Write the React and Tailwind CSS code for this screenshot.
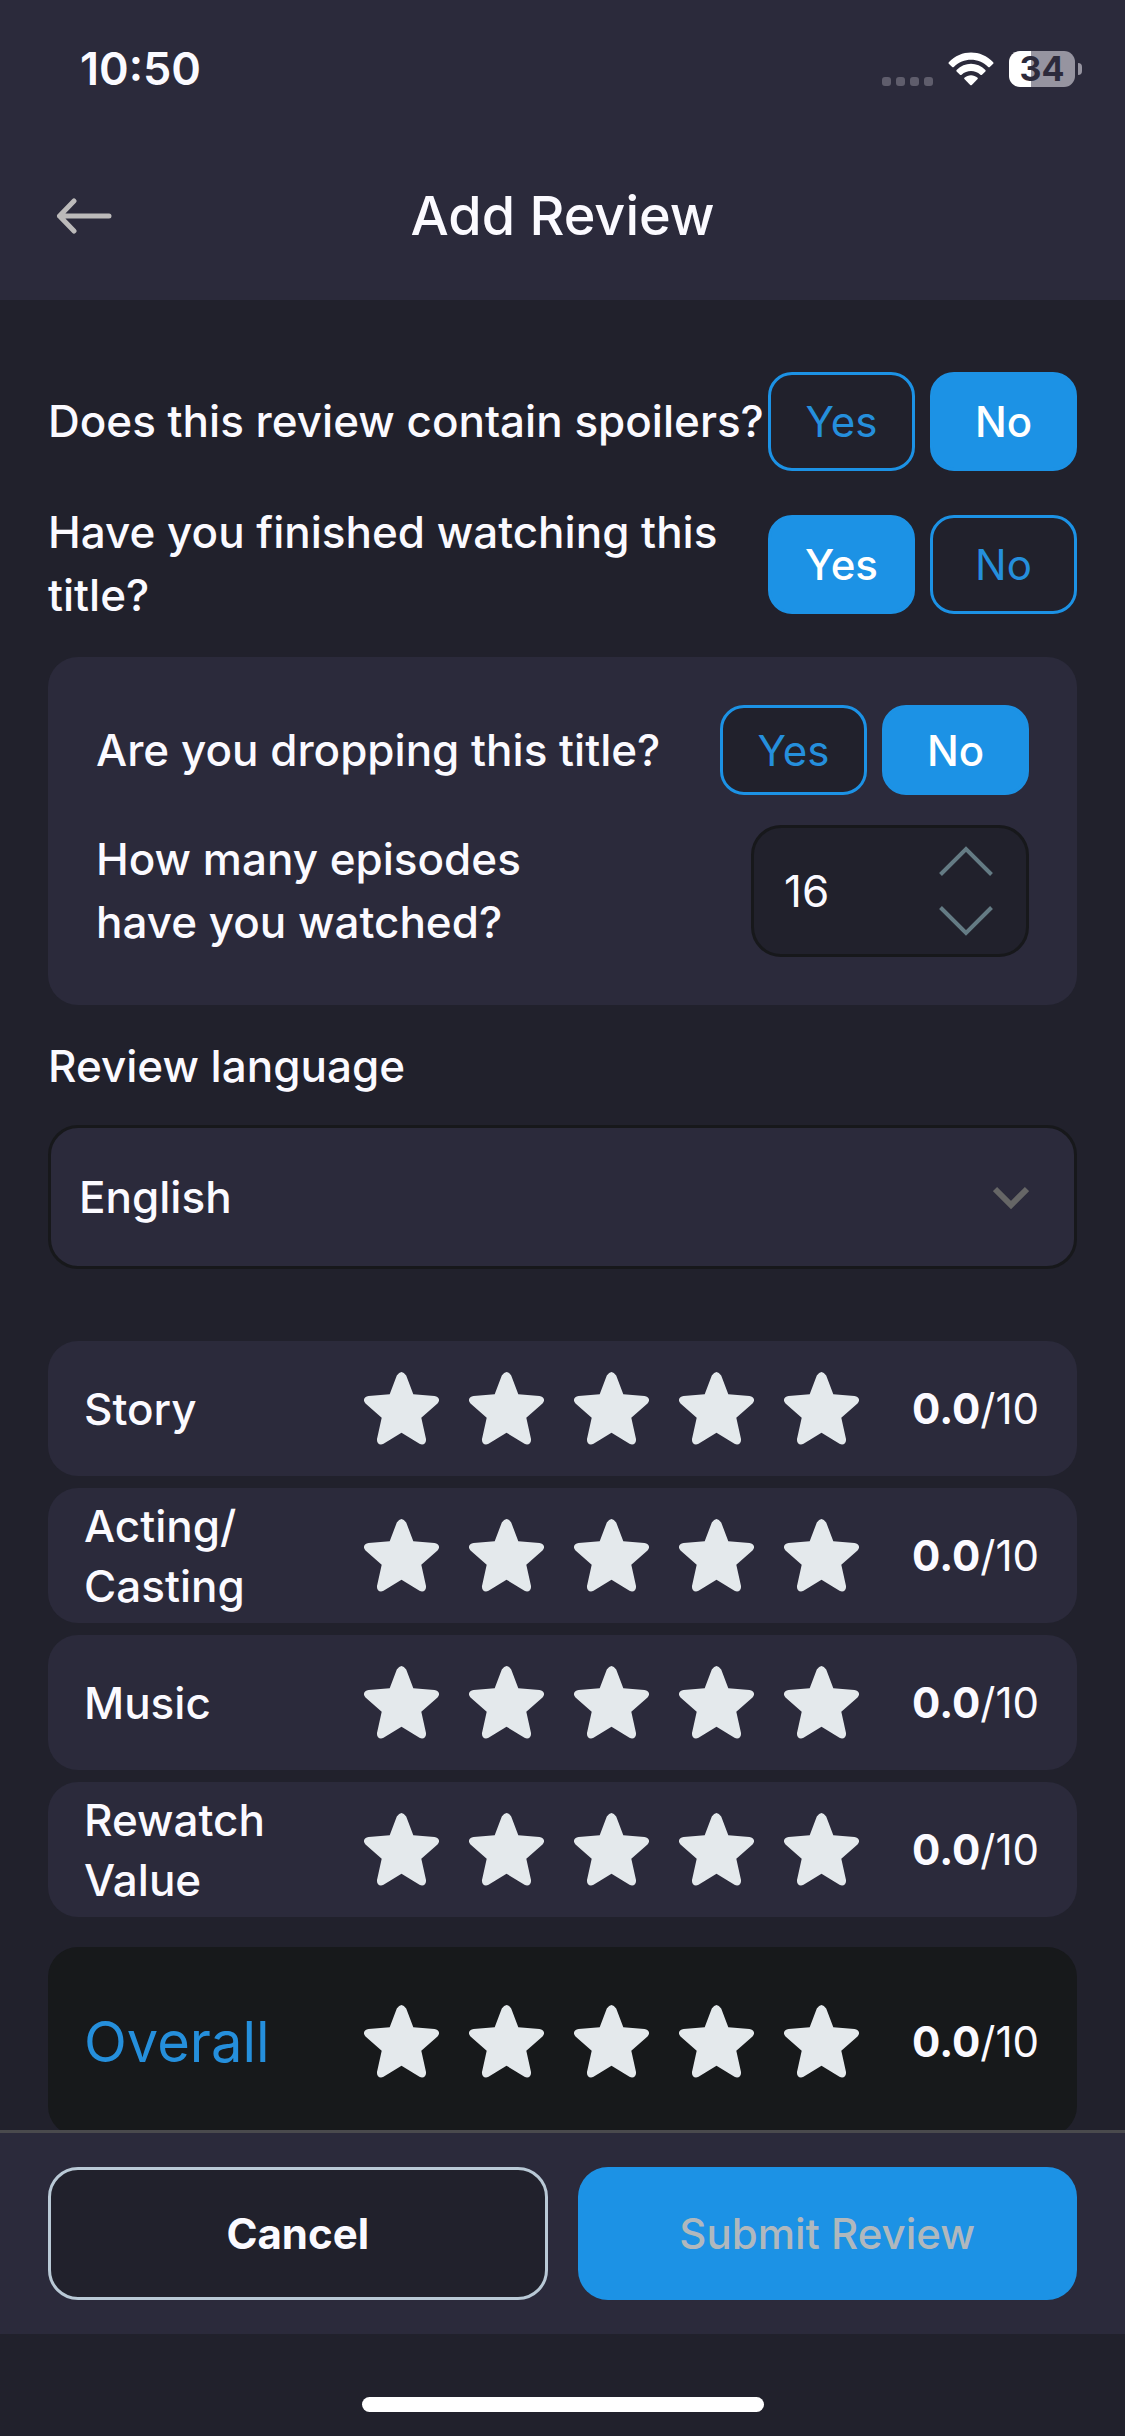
import { useState } from "react";

const STARS = [1, 2, 3, 4, 5];

function StatusBar() {
  return (
    <div className="flex items-center justify-between pt-9 pr-[43px] pl-20">
      <span className="text-[45px] leading-[66px] font-semibold">10:50</span>
      <div className="flex items-center gap-[15px]">
        <div className="flex gap-[5px] pt-6" aria-label="No signal">
          <span className="size-[9px] rounded-[3px] bg-[#5f5d6c]" />
          <span className="size-[9px] rounded-[3px] bg-[#5f5d6c]" />
          <span className="size-[9px] rounded-[3px] bg-[#5f5d6c]" />
          <span className="size-[9px] rounded-[3px] bg-[#5f5d6c]" />
        </div>
        <svg width="46" height="34" viewBox="0 0 46 34" aria-label="Wi-Fi">
          <path d="M0.8 10.2C13 -2.8 33 -2.8 45.2 10.2Q45.8 11 45.2 11.8L41.8 15Q41 15.600 40.200 14.900C30.500 5.400 15.500 5.400 5.800 14.900Q5 15.600 4.200 15L0.800 11.800Q0.200 11 0.800 10.200Z" fill="#fff" />
          <path d="M8.600 18C16.800 9.800 29.200 9.800 37.400 18Q38 18.700 37.400 19.400L34 22.700Q33.200 23.300 32.400 22.700C27 17.700 19 17.700 13.600 22.700Q12.800 23.300 12 22.700L8.600 19.400Q8 18.700 8.600 18Z" fill="#fff" />
          <path d="M16.400 25.700C20.200 22.300 25.800 22.300 29.600 25.700Q30.200 26.400 29.600 27.100L23.800 32.900Q23 33.600 22.200 32.900L16.400 27.100Q15.800 26.400 16.400 25.700Z" fill="#fff" />
        </svg>
        <div className="flex items-center gap-[3px]">
          <div className="flex h-9 w-[66px] items-center justify-center rounded-[11px] bg-linear-to-r from-white from-33% to-[#9694a0] to-33% text-[34px] leading-9 font-bold text-[#2c2a3b]">
            34
          </div>
          <span className="h-3 w-1 rounded-r-full bg-[#9694a0]" />
        </div>
      </div>
    </div>
  );
}

function Choice({ label, selected, onClick, compact }) {
  return (
    <button
      type="button"
      aria-pressed={selected}
      onClick={onClick}
      className={
        "w-[147px] rounded-3xl border-3 border-[#1c92e5] text-[42px] leading-[63px] " +
        (compact ? "h-[90px] " : "h-[99px] ") +
        (selected ? "bg-[#1c92e5] font-medium text-white" : "bg-[#21212c] font-normal text-[#258fdc]")
      }
    >
      {label}
    </button>
  );
}

function YesNo({ question, initial, compact }) {
  const [value, setValue] = useState(initial);
  return (
    <div role="group" aria-label={question} className="flex items-center justify-between">
      <p className="min-w-0 flex-1">{question}</p>
      <div className="flex shrink-0 gap-[15px]">
        <Choice label="Yes" compact={compact} selected={value === "yes"} onClick={() => setValue("yes")} />
        <Choice label="No" compact={compact} selected={value === "no"} onClick={() => setValue("no")} />
      </div>
    </div>
  );
}

function EpisodeInput() {
  const [count, setCount] = useState(16);
  return (
    <div className="flex items-center justify-between">
      <label htmlFor="episodes" className="w-[440px]">
        How many episodes have you watched?
      </label>
      <div className="flex h-[132px] w-[278px] items-center justify-between rounded-[30px] border-3 border-[#17181b] bg-[#21212c] pr-[33px] pl-[30px]">
        <input
          id="episodes"
          type="text"
          inputMode="numeric"
          value={count}
          onChange={(e) => setCount(Number(e.target.value) || 0)}
          className="w-24 bg-transparent font-normal outline-none"
        />
        <div className="flex flex-col gap-[30px]">
          <button type="button" aria-label="More episodes" onClick={() => setCount(count + 1)}>
            <svg className="block" width="54" height="30" viewBox="0 0 54 30" fill="none" stroke="#647b84" strokeWidth="4">
              <path d="M1.500 28.500L27 3L52.500 28.500" />
            </svg>
          </button>
          <button type="button" aria-label="Fewer episodes" onClick={() => setCount(Math.max(0, count - 1))}>
            <svg className="block" width="54" height="30" viewBox="0 0 54 30" fill="none" stroke="#647b84" strokeWidth="4">
              <path d="M1.500 1.500L27 27L52.500 1.500" />
            </svg>
          </button>
        </div>
      </div>
    </div>
  );
}

function StarIcon() {
  return (
    <svg className="block" width="75" height="73" viewBox="0 0 75 73" fill="#e4e9ec">
      <path d="M32.800 3.500Q37.500 -3.500 42.200 3.500L49.300 22.300L70.500 23.900C75 24.500 76.500 28.500 73.500 31.500L57.300 45.700L62 67C62.500 71.500 59 74 55.500 71.800L37.500 60.700L19.500 71.800C16 74 12.500 71.500 13 67L17.700 45.700L1.500 31.500C-1.500 28.500 0 24.500 4.500 23.900L25.700 22.300Z" />
    </svg>
  );
}

function Rating({ label, overall }) {
  return (
    <div
      role="group"
      aria-label={label}
      className={
        "flex items-center rounded-[30px] pr-[38px] pl-9 " +
        (overall ? "mt-[18px] h-[189px] bg-[#17191b]" : "h-[135px] bg-[#2b2a3b]")
      }
    >
      <span
        className={
          "w-[280px] shrink-0 " +
          (overall ? "text-[56px] leading-[60px] font-normal text-[#258fdc]" : "leading-[60px]")
        }
      >
        <span className={overall ? "block" : "block w-[200px]"}>{label}</span>
      </span>
      <div className="flex gap-[30px]">
        {STARS.map((n) => (
          <button key={n} type="button" aria-label={n + " of 5 stars"}>
            <StarIcon />
          </button>
        ))}
      </div>
      <span className="ml-auto text-[42px] font-normal whitespace-nowrap">
        <b className="font-bold">0.0</b>/10
      </span>
    </div>
  );
}

export default function App() {
  return (
    <div className="flex h-screen flex-col bg-[#21212c] font-['Inter',sans-serif] text-[44px] leading-[63px] font-medium text-[#fbfaff]">
      <header className="bg-[#2b2a3b]">
        <StatusBar />
        <div className="grid h-[198px] grid-cols-[1fr_auto_1fr] items-center px-14 pt-[30px]">
          <button type="button" aria-label="Back" className="justify-self-start">
            <svg className="block" width="56" height="36" viewBox="0 0 56 36" fill="none" stroke="#bcbaba" strokeWidth="5" strokeLinecap="round" strokeLinejoin="round">
              <path d="M53 18H3.500M18 3L3.500 18L18 33" />
            </svg>
          </button>
          <h1 className="text-[54px] leading-[66px] font-medium">Add Review</h1>
        </div>
      </header>

      <main className="min-h-0 flex-1 overflow-y-auto px-12 pt-[72px] [scrollbar-width:none]">
        <YesNo question="Does this review contain spoilers?" initial="no" />
        <div className="mt-[30px]">
          <YesNo question="Have you finished watching this title?" initial="yes" />
        </div>

        <section className="mt-[30px] flex flex-col gap-[30px] rounded-[30px] bg-[#2b2a3b] p-12">
          <YesNo question="Are you dropping this title?" initial="no" compact />
          <EpisodeInput />
        </section>

        <label htmlFor="language" className="mt-[30px] block">
          Review language
        </label>
        <div className="relative mt-[27px]">
          <select
            id="language"
            className="h-36 w-full appearance-none rounded-[30px] border-3 border-[#17181b] bg-[#2b2a3b] px-7"
          >
            <option>English</option>
          </select>
          <svg className="pointer-events-none absolute top-[61px] right-12" width="36" height="24" viewBox="0 0 36 24" fill="none" stroke="#666666" strokeWidth="6">
            <path d="M2 3L18 19L34 3" />
          </svg>
        </div>

        <section className="mt-[72px] flex flex-col gap-3">
          <Rating label="Story" />
          <Rating label="Acting/ Casting" />
          <Rating label="Music" />
          <Rating label="Rewatch Value" />
          <Rating label="Overall" overall />
        </section>
      </main>

      <footer className="text-[42px]">
        <div className="grid grid-cols-2 gap-[30px] border-t-3 border-[#4a4a4d] bg-[#2b2a3b] px-12 pt-[34px] pb-[34px]">
          <button type="button" className="h-[133px] rounded-[30px] border-3 border-[#b9c9d6] bg-[#21212c] font-bold">
            Cancel
          </button>
          <button type="button" className="h-[133px] rounded-[30px] bg-[#1c92e5] font-medium text-[#b0b8bd]">
            Submit Review
          </button>
        </div>
        <div className="flex justify-center pt-[63px] pb-6">
          <span className="h-[15px] w-[402px] rounded-full bg-white" />
        </div>
      </footer>
    </div>
  );
}
